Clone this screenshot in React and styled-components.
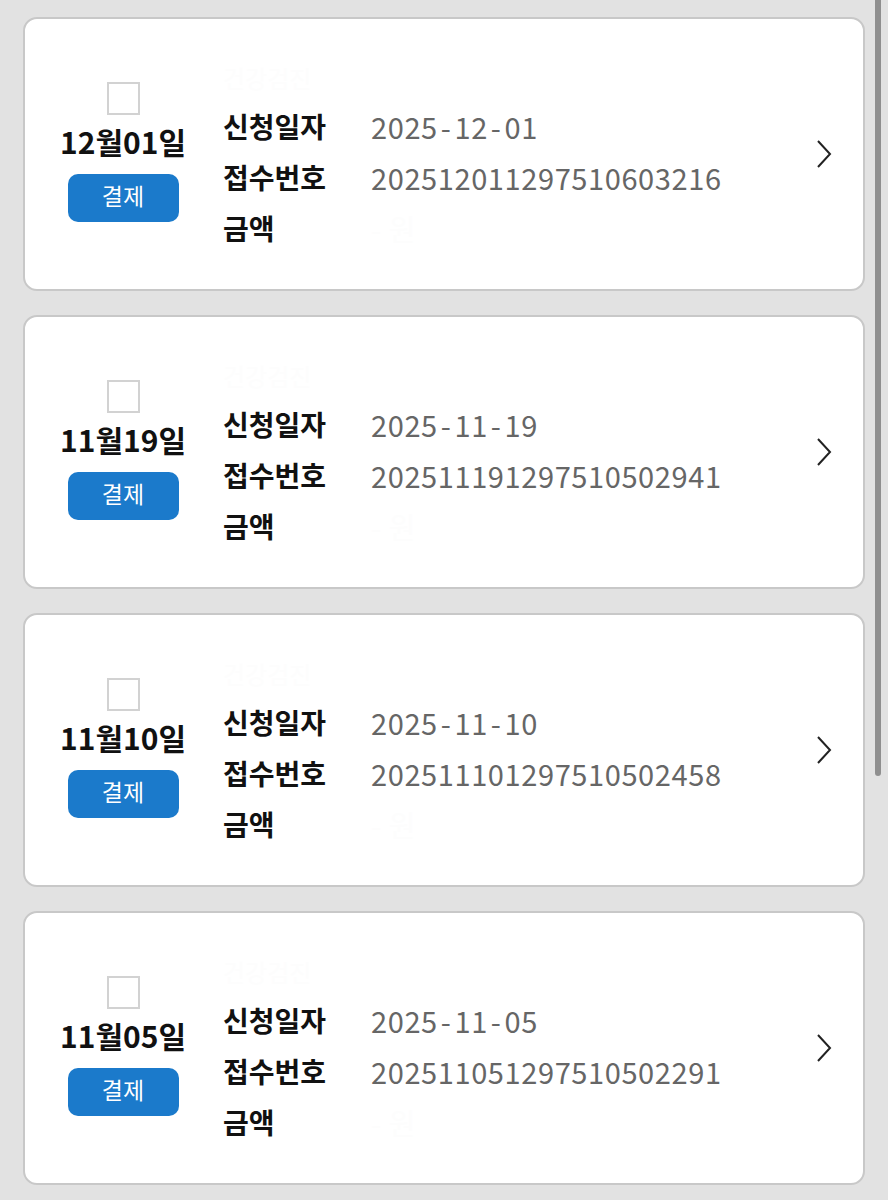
import React from 'react'
import styled, { createGlobalStyle } from 'styled-components'

const GlobalStyle = createGlobalStyle`
  body {
    margin: 0;
    background: #e2e2e2;
    font-family: "Noto Sans CJK KR", "Noto Sans", sans-serif;
  }
`

const StyledList = styled.ul`
  display: flex;
  flex-direction: column;
  gap: 24px;
  margin: 0;
  padding: 17px 23px 0 23px;
  list-style: none;
`

const StyledCard = styled.li`
  display: flex;
  align-items: center;
  box-sizing: border-box;
  height: 274px;
  background-color: #fff;
  border: 2px solid #c8c8c8;
  border-radius: 14px;
`

const StyledLeft = styled.div`
  display: flex;
  flex-direction: column;
  align-items: center;
  width: 196px;
  flex-shrink: 0;
  padding-bottom: 5px;
`

const StyledCheck = styled.span`
  display: block;
  box-sizing: border-box;
  width: 33px;
  height: 33px;
  border: 2px solid #d2d2d2;
  background: #fff;
`

const StyledDate = styled.div`
  margin-top: 6px;
  font-size: 30px;
  font-weight: 700;
  line-height: 40px;
  color: #111;
`

const StyledPay = styled.button`
  margin-top: 13px;
  width: 111px;
  height: 48px;
  border: none;
  border-radius: 10px;
  background-color: #1b7acb;
  color: #fff;
  font-family: inherit;
  font-size: 23px;
  font-weight: 400;
  padding: 0 0 6px;
`

const StyledInfo = styled.dl`
  flex: 1;
  margin: 0 0 0 2px;
`

const StyledTitle = styled.div`
  height: 46px;
  font-size: 24px;
  line-height: 46px;
  color: #fdfdfd;
`

const StyledRow = styled.div`
  display: flex;
  align-items: center;
  height: 51px;
`

const StyledLabel = styled.dt`
  width: 148px;
  font-size: 28px;
  font-weight: 700;
  color: #111;
`

const StyledValue = styled.dd`
  margin: 0;
  font-size: 29px;
  letter-spacing: 0.6px;
  color: ${props => (props.faint ? '#fdfdfd' : '#666')};
`

const StyledDash = styled.span`
  margin: 0 3px;
`

const StyledArrow = styled.svg`
  margin-right: 31px;
  flex-shrink: 0;
`

const StyledScroll = styled.div`
  position: fixed;
  top: 0;
  right: 7px;
  width: 6px;
  height: 776px;
  background: #8f8f8f;
  border-radius: 0 0 3px 3px;
`

const items = [
  { id: 1, date: '12월01일', applied: '2025-12-01', receipt: '20251201129751060' + '3216' },
  { id: 2, date: '11월19일', applied: '2025-11-19', receipt: '20251119129751050' + '2941' },
  { id: 3, date: '11월10일', applied: '2025-11-10', receipt: '20251110129751050' + '2458' },
  { id: 4, date: '11월05일', applied: '2025-11-05', receipt: '20251105129751050' + '2291' }
]

const DateValue = ({ value }) => {
  const parts = value.split('-')
  return parts.map((part, i) => (
    <React.Fragment key={i}>
      {i > 0 && <StyledDash>-</StyledDash>}
      {part}
    </React.Fragment>
  ))
}

const App = () => {
  return (
    <>
      <GlobalStyle />
      <StyledList>
        {items.map(item => (
          <StyledCard key={item.id}>
            <StyledLeft>
              <StyledCheck />
              <StyledDate>{item.date}</StyledDate>
              <StyledPay>결제</StyledPay>
            </StyledLeft>
            <StyledInfo>
              <StyledTitle>건강검진</StyledTitle>
              <StyledRow>
                <StyledLabel>신청일자</StyledLabel>
                <StyledValue><DateValue value={item.applied} /></StyledValue>
              </StyledRow>
              <StyledRow>
                <StyledLabel>접수번호</StyledLabel>
                <StyledValue>{item.receipt}</StyledValue>
              </StyledRow>
              <StyledRow>
                <StyledLabel>금액</StyledLabel>
                <StyledValue faint>- 원</StyledValue>
              </StyledRow>
            </StyledInfo>
            <StyledArrow width="16" height="30" viewBox="0 0 16 30">
              <polyline points="2,2 14,15 2,28" fill="none" stroke="#222" strokeWidth="2" />
            </StyledArrow>
          </StyledCard>
        ))}
      </StyledList>
      <StyledScroll />
    </>
  )
}

export default App
